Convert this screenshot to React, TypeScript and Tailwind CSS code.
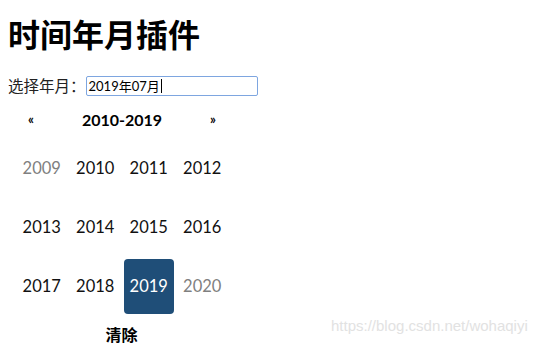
const years = [2009, 2010, 2011, 2012, 2013, 2014, 2015, 2016, 2017, 2018, 2019, 2020];

function YearCell({ year }: { year: number }) {
  const old = year === 2009 || year === 2020;
  const active = year === 2019;
  return (
    <div
      className={
        "mx-[2px] my-[2px] h-[55px] flex items-center justify-center rounded-[4px] text-[16.5px] " +
        (active ? "bg-[#1f4e78] text-white" : old ? "text-[#808080]" : "text-[#111]")
      }
    >
      {year}
    </div>
  );
}

export default function App() {
  return (
    <div
      className="relative w-[538px] h-[346px] overflow-hidden bg-white text-black px-2"
      style={{ fontFamily: '"Lato", "Noto Sans CJK SC", sans-serif' }}
    >
      <h1 className="text-[32px] font-bold leading-[37px] pt-[15px]" style={{ fontFamily: '"Noto Sans CJK SC", sans-serif' }}>
        时间年月插件
      </h1>

      <div className="flex items-center mt-[24px] h-[20px]">
        <span className="text-[15.5px] text-[#222]" style={{ fontFamily: '"Noto Sans CJK SC", sans-serif' }}>
          选择年月：
        </span>
        <div className="w-[172px] h-[20px] border border-[#7ea6e0] rounded-[2px] flex items-center pl-[2px] text-[13px] leading-none">
          <span style={{ fontFamily: '"Lato", "Noto Sans CJK SC", sans-serif' }}>2019年07月</span>
          <span className="w-px h-[14px] bg-black ml-px" />
        </div>
      </div>

      {/* year picker */}
      <div className="ml-[7px] w-[214px] mt-[13px]">
        <div className="flex items-center h-[22px] font-bold">
          <div className="w-[32px] text-center text-[13px]">«</div>
          <div className="w-[150px] text-center text-[16px]">2010-2019</div>
          <div className="w-[32px] text-center text-[13px]">»</div>
        </div>
        <div className="grid grid-cols-4 mt-[8px]">
          {years.map((y) => (
            <YearCell key={y} year={y} />
          ))}
        </div>
        <div className="text-center font-bold text-[16px] leading-[20px] mt-[8px] pr-[1px]" style={{ fontFamily: '"Noto Sans CJK SC", sans-serif' }}>
          清除
        </div>
      </div>

      <div className="absolute left-[331px] top-[315px] text-[15px] text-[#e2e2e2]" style={{ fontFamily: '"Liberation Sans", sans-serif' }}>
        https://blog.csdn.net/wohaqiyi
      </div>
    </div>
  );
}
